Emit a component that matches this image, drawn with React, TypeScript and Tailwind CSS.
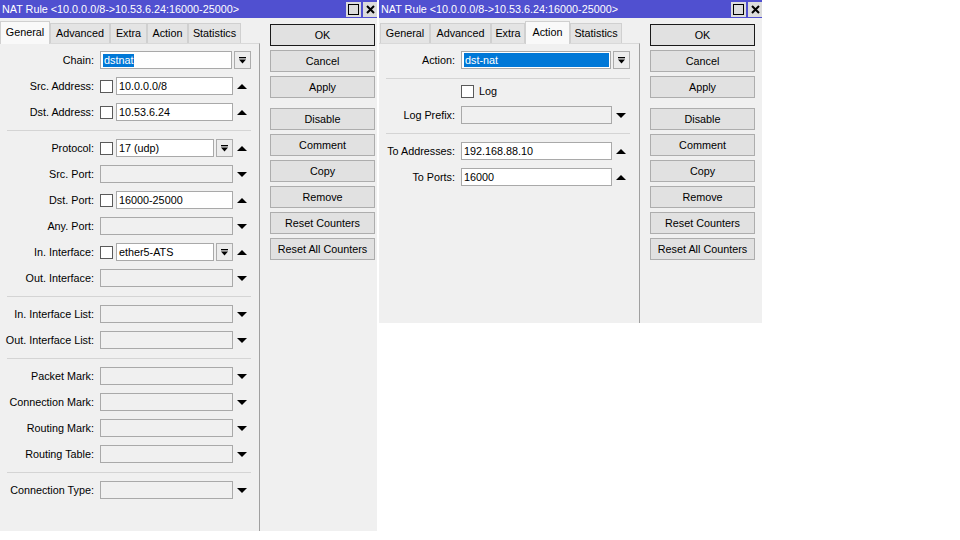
import React from "react";

function Up() {
  return (
    <svg width="10" height="5" viewBox="0 0 10 5">
      <polygon points="0,5 5,0 10,5" fill="#000" />
    </svg>
  );
}

function Down() {
  return (
    <svg width="10" height="5" viewBox="0 0 10 5">
      <polygon points="0,0 10,0 5,5" fill="#000" />
    </svg>
  );
}

function DropBtn() {
  return (
    <div className="w-[17px] h-[18px] shrink-0 border border-[#acacac] bg-[#ececec] flex items-center justify-center">
      <svg width="7" height="7" viewBox="0 0 7 7">
        <rect x="0" y="0" width="7" height="1.3" fill="#000" />
        <polygon points="0,2.4 7,2.4 3.5,6.6" fill="#000" />
      </svg>
    </div>
  );
}

function Check() {
  return <div className="w-[13px] h-[13px] shrink-0 border border-[#5a5a5a] bg-white" />;
}

function Input({
  className = "",
  disabled = false,
  children,
}: {
  className?: string;
  disabled?: boolean;
  children?: React.ReactNode;
}) {
  return (
    <div
      className={
        "h-[18px] border border-[#a9a9a9] flex items-center pl-[2px] whitespace-nowrap overflow-hidden " +
        (disabled ? "bg-[#f0f0f0] " : "bg-white ") +
        className
      }
    >
      {children}
    </div>
  );
}

function Row({
  label,
  right = false,
  main,
  side,
  className = "mb-[8px]",
}: {
  label: string;
  right?: boolean;
  main: React.ReactNode;
  side?: React.ReactNode;
  className?: string;
}) {
  return (
    <div className={"flex items-center h-[18px] shrink-0 " + className}>
      <div className={(right ? "w-[76px]" : "w-[94px]") + " text-right whitespace-nowrap shrink-0"}>{label}</div>
      <div className={(right ? "w-[151px]" : "w-[133px]") + " ml-[6px] h-full flex items-center shrink-0"}>{main}</div>
      <div className="w-[18px] h-full flex items-center justify-center shrink-0">{side}</div>
    </div>
  );
}

function Sep({ className = "mb-[8px]" }: { className?: string }) {
  return <div className={"h-[1px] shrink-0 bg-[#d4d4d4] mt-[1px] ml-[7px] w-[244px] " + className} />;
}

function Btn({ children, def = false, className = "mt-[4px]" }: { children: React.ReactNode; def?: boolean; className?: string }) {
  return (
    <div
      className={
        "h-[22px] flex items-center justify-center bg-[#e1e1e1] border whitespace-nowrap " +
        (def ? "border-[#1a1a1a] " : "border-[#adadad] ") +
        className
      }
    >
      {children}
    </div>
  );
}

function Buttons() {
  return (
    <div className="ml-[10px] pt-[6px] flex flex-col w-[105px]">
      <Btn def className="">OK</Btn>
      <Btn>Cancel</Btn>
      <Btn>Apply</Btn>
      <Btn className="mt-[10px]">Disable</Btn>
      <Btn>Comment</Btn>
      <Btn>Copy</Btn>
      <Btn>Remove</Btn>
      <Btn>Reset Counters</Btn>
      <Btn>Reset All Counters</Btn>
    </div>
  );
}

function TitleBar() {
  return (
    <div className="h-[18px] bg-[#5050d0] flex items-center pl-[2px] shrink-0">
      <span className="text-white flex-1 whitespace-nowrap">
        NAT Rule &lt;10.0.0.0/8-&gt;10.53.6.24:16000-25000&gt;
      </span>
      <div className="flex gap-[2px] items-center">
        <div className="w-[15px] h-[15px] bg-[#dcdcdc] flex items-center justify-center">
          <div className="w-[11px] h-[11px] border-[1.5px] border-black" />
        </div>
        <div className="w-[14px] h-[15px] bg-[#dcdcdc] flex items-center justify-center">
          <svg width="9" height="9" viewBox="0 0 9 9">
            <path d="M1 1 L8 8 M8 1 L1 8" stroke="#000" strokeWidth="2" />
          </svg>
        </div>
      </div>
    </div>
  );
}

type Tab = { name: string; w: string; active?: boolean };

function Tabs({ tabs, pad }: { tabs: Tab[]; pad: string }) {
  return (
    <div className={"h-[25px] flex items-end shrink-0 " + pad}>
      {tabs.map((t) =>
        t.active ? (
          <div
            key={t.name}
            className={
              t.w +
              " h-[23px] mb-[-1px] relative z-10 bg-[#f9f9f9] border-t border-l border-r border-[#d0d0d0] flex items-center justify-center pb-[2px]"
            }
          >
            {t.name}
          </div>
        ) : (
          <div
            key={t.name}
            className={
              t.w +
              " h-[20px] bg-[#e4e4e4] border-t border-l border-r border-[#d0d0d0] flex items-center justify-center"
            }
          >
            {t.name}
          </div>
        )
      )}
    </div>
  );
}

function LeftWindow() {
  const tabs: Tab[] = [
    { name: "General", w: "w-[50px]", active: true },
    { name: "Advanced", w: "w-[60px]" },
    { name: "Extra", w: "w-[37px]" },
    { name: "Action", w: "w-[41px]" },
    { name: "Statistics", w: "w-[53px]" },
  ];
  const empty = (label: string, cls?: string) => (
    <Row label={label} main={<Input disabled className="w-[133px]" />} side={<Down />} className={cls} />
  );
  return (
    <div className="w-[377px] h-[531px] bg-[#f0f0f0] flex flex-col shrink-0">
      <TitleBar />
      <div className="flex flex-1">
        <div className="flex flex-col w-[260px]">
          <Tabs tabs={tabs} pad="" />
          <div className="flex-1 flex flex-col border-t border-r border-t-[#d9d9d9] border-r-[#a0a0a0] pt-[7px]">
            <Row
              label="Chain:"
              main={
                <Input className="w-[132px] pl-[1px]">
                  <span className="bg-[#0078d7] text-white px-[1px]">dstnat</span>
                </Input>
              }
              side={<DropBtn />}
            />
            <Row
              label="Src. Address:"
              main={
                <>
                  <Check />
                  <Input className="ml-[3px] flex-1">10.0.0.0/8</Input>
                </>
              }
              side={<Up />}
            />
            <Row
              label="Dst. Address:"
              main={
                <>
                  <Check />
                  <Input className="ml-[3px] flex-1">10.53.6.24</Input>
                </>
              }
              side={<Up />}
            />
            <Sep />
            <Row
              label="Protocol:"
              main={
                <>
                  <Check />
                  <Input className="ml-[3px] w-[98px]">17 (udp)</Input>
                  <div className="ml-[2px]">
                    <DropBtn />
                  </div>
                </>
              }
              side={<Up />}
            />
            {empty("Src. Port:")}
            <Row
              label="Dst. Port:"
              main={
                <>
                  <Check />
                  <Input className="ml-[3px] flex-1">16000-25000</Input>
                </>
              }
              side={<Up />}
            />
            {empty("Any. Port:")}
            <Row
              label="In. Interface:"
              main={
                <>
                  <Check />
                  <Input className="ml-[3px] w-[98px]">ether5-ATS</Input>
                  <div className="ml-[2px]">
                    <DropBtn />
                  </div>
                </>
              }
              side={<Up />}
            />
            {empty("Out. Interface:")}
            <Sep />
            {empty("In. Interface List:")}
            {empty("Out. Interface List:")}
            <Sep />
            {empty("Packet Mark:")}
            {empty("Connection Mark:")}
            {empty("Routing Mark:")}
            {empty("Routing Table:")}
            <Sep />
            {empty("Connection Type:")}
          </div>
        </div>
        <Buttons />
      </div>
    </div>
  );
}

function RightWindow() {
  const tabs: Tab[] = [
    { name: "General", w: "w-[50px]" },
    { name: "Advanced", w: "w-[61px]" },
    { name: "Extra", w: "w-[34px]" },
    { name: "Action", w: "w-[45px]", active: true },
    { name: "Statistics", w: "w-[52px]" },
  ];
  return (
    <div className="w-[383px] h-[323px] bg-[#f0f0f0] flex flex-col ml-[2px] shrink-0">
      <TitleBar />
      <div className="flex flex-1">
        <div className="flex flex-col w-[261px]">
          <Tabs tabs={tabs} pad="pl-[1px]" />
          <div className="flex-1 flex flex-col border-t border-r border-t-[#d9d9d9] border-r-[#a0a0a0] pt-[7px]">
            <Row
              right
              label="Action:"
              main={
                <Input className="w-[150px] p-[1px]">
                  <div className="flex-1 h-full bg-[#0078d7] text-white pl-[1px] flex items-center">dst-nat</div>
                </Input>
              }
              side={<DropBtn />}
            />
            <Sep className="mb-[3px]" />
            <Row
              right
              label=""
              className="mb-[6px]"
              main={
                <>
                  <Check />
                  <span className="ml-[5px]">Log</span>
                </>
              }
            />
            <Row right label="Log Prefix:" main={<Input disabled className="w-[151px]" />} side={<Down />} />
            <Sep />
            <Row right label="To Addresses:" main={<Input className="w-[151px]">192.168.88.10</Input>} side={<Up />} />
            <Row right label="To Ports:" main={<Input className="w-[151px]">16000</Input>} side={<Up />} />
          </div>
        </div>
        <Buttons />
      </div>
    </div>
  );
}

export default function App() {
  return (
    <div className="w-[960px] h-[540px] bg-white flex items-start font-['Liberation_Sans',Arial,sans-serif] text-[10.8px] leading-[13px] text-black overflow-hidden">
      <LeftWindow />
      <RightWindow />
    </div>
  );
}
